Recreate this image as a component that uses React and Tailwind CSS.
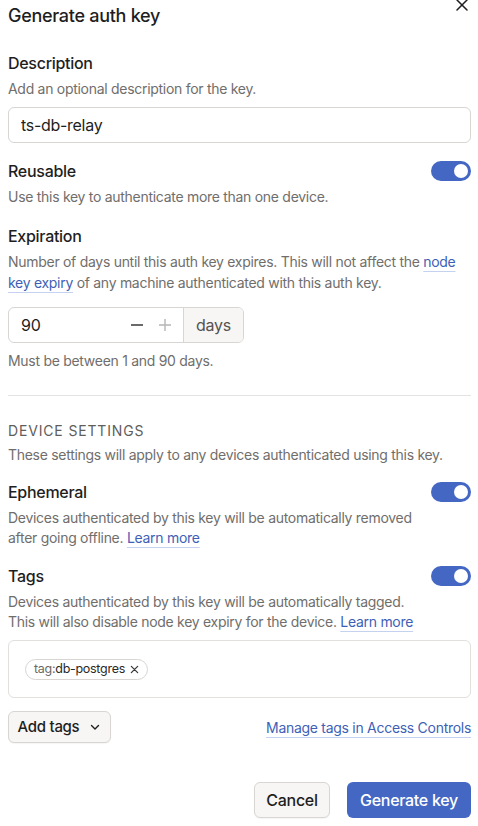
import React, { useState } from 'react';

const Toggle = ({ on, onChange }) => (
  <button
    type="button"
    onClick={() => onChange(!on)}
    className={`relative h-5 w-10 shrink-0 rounded-full transition ${on ? 'bg-[#4467c4]' : 'bg-[#d6d3d1]'}`}
    aria-pressed={on}
  >
    <span
      className={`absolute top-[3px] h-[14px] w-[14px] rounded-full bg-white transition-all ${on ? 'left-[23px]' : 'left-[3px]'}`}
    />
  </button>
);

const Link = ({ children }) => (
  <a href="#" className="text-[#3e5fb6] underline decoration-[#c4d1ef] decoration-1 underline-offset-[4px]">
    {children}
  </a>
);

export default function App() {
  const [desc, setDesc] = useState('ts-db-relay');
  const [reusable, setReusable] = useState(true);
  const [ephemeral, setEphemeral] = useState(true);
  const [tagsOn, setTagsOn] = useState(true);
  const [days, setDays] = useState(90);

  return (
    <div className="relative min-h-[826px] bg-white pl-2 pr-[7px] text-[#1f1e1e] tracking-[-0.018em] font-['Inter',sans-serif]">
      <button type="button" className="absolute right-[8px] top-[-3px] text-[#1f1e1e]" aria-label="Close">
        <svg width="16" height="16" viewBox="0 0 16 16" fill="none" stroke="currentColor" strokeWidth="1.5" strokeLinecap="round">
          <path d="M3 3l10 10M13 3L3 13" />
        </svg>
      </button>

      <h1 className="pt-[4px] text-[18px] leading-6 font-medium">Generate auth key</h1>

      <div className="mt-[23px] text-[16px] leading-6 font-medium">Description</div>
      <p className="mt-[4px] text-[14px] leading-5 text-[#706e6c]">Add an optional description for the key.</p>
      <input
        value={desc}
        onChange={(e) => setDesc(e.target.value)}
        className="mt-2 h-9 w-full rounded-md border border-[#d8d5d3] px-3 text-[16px] text-[#1f1e1e] outline-none"
      />

      <div className="mt-4 flex h-6 items-center justify-between">
        <span className="text-[16px] font-medium">Reusable</span>
        <Toggle on={reusable} onChange={setReusable} />
      </div>
      <p className="mt-1 text-[14px] leading-5 text-[#706e6c]">Use this key to authenticate more than one device.</p>

      <div className="mt-[17px] text-[16px] leading-6 font-medium">Expiration</div>
      <p className="mt-[3px] text-[14px] leading-[21px] text-[#706e6c]">
        Number of days until this auth key expires. This will not affect the <Link>node key expiry</Link> of any machine authenticated with this auth key.
      </p>
      <div className="mt-[14px] flex h-9 w-[236px] overflow-hidden rounded-md border border-[#d8d5d3]">
        <input
          value={days}
          onChange={(e) => setDays(e.target.value)}
          className="w-0 flex-1 px-3 text-[16px] text-[#1f1e1e] outline-none"
        />
        <div className="flex items-center gap-[14px] pr-[11px]">
          <button type="button" onClick={() => setDays(Math.max(1, days - 1))} className="text-[#3a3836]">
            <svg width="14" height="14" viewBox="0 0 14 14" stroke="currentColor" strokeWidth="1.6"><path d="M1 7h12" /></svg>
          </button>
          <button type="button" onClick={() => setDays(Math.min(90, days + 1))} className="text-[#b8b5b2]">
            <svg width="14" height="14" viewBox="0 0 14 14" stroke="currentColor" strokeWidth="1.4"><path d="M1 7h12M7 1v12" /></svg>
          </button>
        </div>
        <div className="flex w-[60px] items-center justify-center border-l border-[#d8d5d3] bg-[#f7f6f5] text-[16px] text-[#55524f]">days</div>
      </div>
      <p className="mt-[8px] text-[14px] leading-5 text-[#706e6c]">Must be between 1 and 90 days.</p>

      <div className="mt-[24px] h-px bg-[#e5e3e1]" />

      <div className="mt-[25px] text-[14px] leading-5 tracking-[0.06em] uppercase text-[#605d5a]">Device settings</div>
      <p className="mt-1 text-[14px] leading-5 text-[#706e6c]">These settings will apply to any devices authenticated using this key.</p>

      <div className="mt-[15px] flex h-6 items-center justify-between">
        <span className="text-[16px] font-medium">Ephemeral</span>
        <Toggle on={ephemeral} onChange={setEphemeral} />
      </div>
      <p className="mt-1 max-w-[420px] text-[14px] leading-5 text-[#706e6c]">
        Devices authenticated by this key will be automatically removed after going offline. <Link>Learn more</Link>
      </p>

      <div className="mt-4 flex h-6 items-center justify-between">
        <span className="text-[16px] font-medium">Tags</span>
        <Toggle on={tagsOn} onChange={setTagsOn} />
      </div>
      <p className="mt-1 text-[14px] leading-5 text-[#706e6c]">
        Devices authenticated by this key will be automatically tagged.
        <br />
        This will also disable node key expiry for the device. <Link>Learn more</Link>
      </p>

      <div className="mt-2 flex h-[58px] items-center rounded-md border border-[#e2dfdd] px-4">
        <span className="flex h-[21px] items-center gap-[5px] rounded-full border border-[#d8d5d3] px-[8px] text-[12.5px]">
          <span>
            <span className="text-[#6b6865]">tag:</span>
            <span className="text-[#2b2927]">db-postgres</span>
          </span>
          <svg width="9" height="9" viewBox="0 0 10 10" stroke="#3a3836" strokeWidth="1.4" strokeLinecap="round">
            <path d="M1.5 1.5l7 7M8.5 1.5l-7 7" />
          </svg>
        </span>
      </div>

      <div className="mt-[13px] flex items-center justify-between">
        <button type="button" className="flex h-8 w-[103px] items-center justify-center gap-[10px] rounded-md border border-[#d8d5d3] bg-[#f7f6f5] text-[15px] font-medium text-[#1f1e1e] shadow-[0_1px_1px_rgba(0,0,0,0.04)]">
          Add tags
          <svg width="12" height="12" viewBox="0 0 12 12" fill="none" stroke="currentColor" strokeWidth="1.4" strokeLinecap="round" strokeLinejoin="round">
            <path d="M2.5 4.5L6 8l3.5-3.5" />
          </svg>
        </button>
        <span className="text-[14px]">
          <Link>Manage tags in Access Controls</Link>
        </span>
      </div>

      <div className="mt-[39px] flex justify-end gap-[17px]">
        <button type="button" className="h-9 w-[76px] rounded-md border border-[#d8d5d3] bg-[#f7f6f5] text-[16px] font-medium text-[#1f1e1e] shadow-[0_1px_1px_rgba(0,0,0,0.04)]">
          Cancel
        </button>
        <button type="button" className="h-9 w-[124px] rounded-md bg-[#4467c4] text-[16px] font-medium text-white">
          Generate key
        </button>
      </div>
    </div>
  );
}
